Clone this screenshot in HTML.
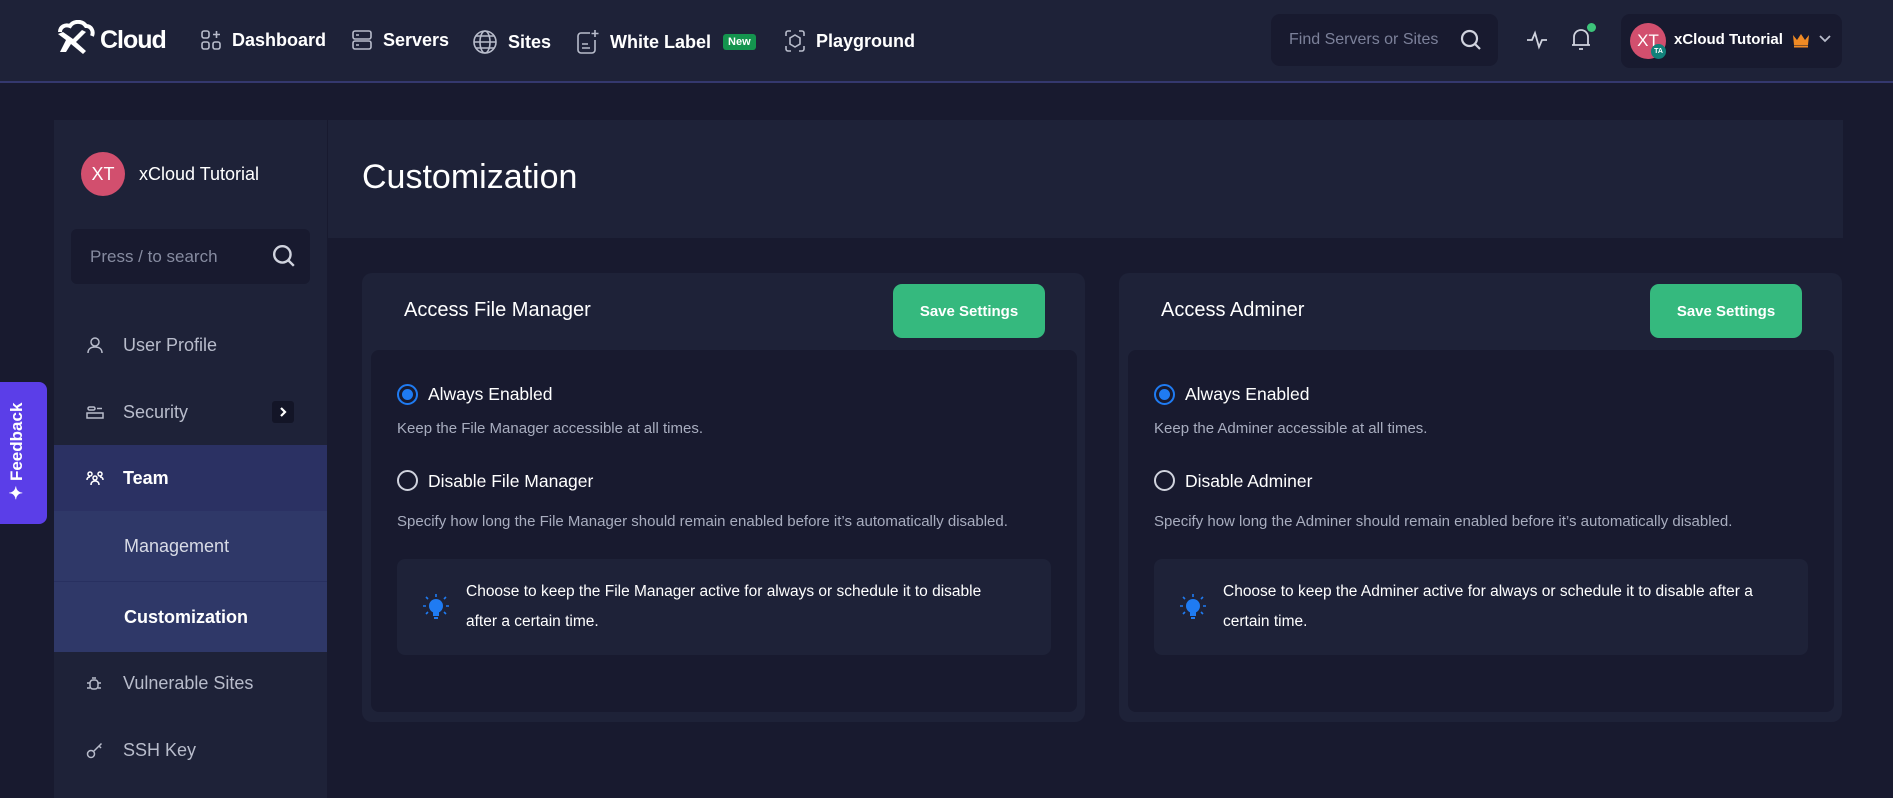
<!DOCTYPE html>
<html><head><meta charset="utf-8">
<style>
*{box-sizing:border-box;margin:0;padding:0}
body{width:1893px;height:798px;overflow:hidden;background:#181a2f;font-family:"Liberation Sans",sans-serif;color:#fff;position:relative}
.abs{position:absolute}
.hdr{left:0;top:0;width:1893px;height:83px;background:#1e2238;border-bottom:2px solid #34386e}
.nav{top:29px;font-size:18px;font-weight:bold;color:#fff;display:flex;align-items:center}
.nav svg{margin-right:10px}
.side{left:54px;top:120px;width:273px;height:678px;background:#1e2238}
.item{position:absolute;left:0;width:273px;display:flex;align-items:center;font-size:18px;color:#b8bccb}
.item > svg{position:absolute;left:32px}
.item span{position:absolute;left:69px}
.card{background:#1e2238;border-radius:10px}
.inner{background:#181a2f;border-radius:8px}
.btn{background:#35b97e;border-radius:9px;font-size:15px;font-weight:bold;display:flex;align-items:center;justify-content:center}
.radio{width:21px;height:21px;border-radius:50%;border:2px solid #d0d3de}
.radio.on{border-color:#1f7bf2}
.radio.on::after{content:"";position:absolute;left:3px;top:3px;width:11px;height:11px;border-radius:50%;background:#1f7bf2}
.lbl{font-size:17.5px;color:#fff}
.desc{font-size:15px;color:#a8adbf}
.info{background:#1e2238;border-radius:8px}
.infot{font-size:15.5px;line-height:30px;color:#fff}
.ct{font-size:20px;color:#fff}
</style></head><body>
<div class="abs hdr"></div>
<svg class="abs" style="left:54px;top:20px" width="44" height="36" viewBox="0 0 44 36"><path d="M6 12c0-5 5-8 10-6 3-5 12-6 16 0 5 0 8 5 6 10" fill="none" stroke="#fff" stroke-width="4"/><path d="M4 14l8 6-6 12h6l5-8 12 10 3-3-10-9 10-10-4-2-9 9-10-7z" fill="#fff"/></svg>
<div class="abs" style="left:100px;top:26px;font-size:25px;font-weight:bold;letter-spacing:-1px">Cloud</div>
<div class="abs nav" style="left:200px"><svg width="22" height="22" viewBox="0 0 22 22" fill="none" stroke="#b8bccb" stroke-width="1.6"><rect x="2" y="2" width="7" height="7" rx="2"/><rect x="2" y="13" width="7" height="7" rx="2"/><rect x="13" y="13" width="7" height="7" rx="2"/><path d="M16.5 2v7M13 5.5h7"/></svg>Dashboard</div>
<div class="abs nav" style="left:351px"><svg width="22" height="22" viewBox="0 0 22 22" fill="none" stroke="#b8bccb" stroke-width="1.6"><rect x="2" y="2" width="18" height="8" rx="2"/><rect x="2" y="12" width="18" height="8" rx="2"/><path d="M5 6h3M5 16h3"/></svg>Servers</div>
<div class="abs nav" style="left:472px"><svg width="26" height="26" viewBox="0 0 26 26" fill="none" stroke="#b8bccb" stroke-width="1.6"><circle cx="13" cy="13" r="11"/><ellipse cx="13" cy="13" rx="5" ry="11"/><path d="M2 13h22M4 7h18M4 19h18"/></svg>Sites</div>
<div class="abs nav" style="left:576px"><svg width="24" height="26" viewBox="0 0 24 26" fill="none" stroke="#b8bccb" stroke-width="1.6"><path d="M14 4H5a3 3 0 0 0-3 3v14a3 3 0 0 0 3 3h11a3 3 0 0 0 3-3V11"/><path d="M19 1v7M15.5 4.5h7M6 15h6M6 19h8"/></svg>White Label<span style="margin-left:12px;background:#14944e;font-size:11px;padding:2px 5px;border-radius:3px">New</span></div>
<div class="abs nav" style="left:784px"><svg width="22" height="24" viewBox="0 0 22 24" fill="none" stroke="#b8bccb" stroke-width="1.6"><path d="M2 7V4a2 2 0 0 1 2-2h3M15 2h3a2 2 0 0 1 2 2v3M20 17v3a2 2 0 0 1-2 2h-3M7 22H4a2 2 0 0 1-2-2v-3"/><path d="M11 6l5 3v6l-5 3-5-3V9z"/></svg>Playground</div>
<div class="abs" style="left:1271px;top:14px;width:227px;height:52px;background:#181a2f;border-radius:9px"></div>
<div class="abs" style="left:1289px;top:31px;font-size:16px;color:#7c819a">Find Servers or Sites</div>
<svg class="abs" style="left:1460px;top:29px" width="22" height="22" viewBox="0 0 22 22" fill="none" stroke="#d0d3de" stroke-width="2.2"><circle cx="9.5" cy="9.5" r="7.5"/><path d="M15 15l5 5"/></svg>
<svg class="abs" style="left:1525px;top:28px" width="24" height="24" viewBox="0 0 24 24" fill="none" stroke="#d0d3de" stroke-width="1.8"><path d="M2 12h5l3-7 4 14 3-7h5"/></svg>
<svg class="abs" style="left:1569px;top:26px" width="24" height="26" viewBox="0 0 24 26" fill="none" stroke="#d0d3de" stroke-width="1.8"><path d="M5 19V11a7 7 0 0 1 14 0v8H5zM3 19h18M10 23h4"/></svg>
<div class="abs" style="left:1587px;top:23px;width:9px;height:9px;border-radius:50%;background:#3dc47a"></div>
<div class="abs" style="left:1621px;top:14px;width:221px;height:54px;background:#181a2f;border-radius:9px"></div>
<div class="abs" style="left:1630px;top:23px;width:36px;height:36px;border-radius:50%;background:#d24f6e;font-size:17px;display:flex;align-items:center;justify-content:center">XT</div>
<div class="abs" style="left:1651px;top:44px;width:15px;height:15px;border-radius:50%;background:#11817a;font-size:7px;font-weight:bold;display:flex;align-items:center;justify-content:center">TA</div>
<div class="abs" style="left:1674px;top:31px;font-size:15px;font-weight:bold">xCloud Tutorial</div>
<svg class="abs" style="left:1792px;top:32px" width="18" height="16" viewBox="0 0 18 16"><path d="M1 3l4 5 4-6 4 6 4-5-1 10H2z" fill="#f08a24"/><rect x="2" y="13.5" width="14" height="2" fill="#f08a24"/></svg>
<svg class="abs" style="left:1818px;top:34px" width="14" height="10" viewBox="0 0 14 10" fill="none" stroke="#b8bccb" stroke-width="1.8"><path d="M2 2l5 5 5-5"/></svg>

<div class="abs side">
  <div class="abs" style="left:27px;top:32px;width:44px;height:44px;border-radius:50%;background:#d24f6e;font-size:18px;display:flex;align-items:center;justify-content:center">XT</div>
  <div class="abs" style="left:85px;top:44px;font-size:18px;color:#fff">xCloud Tutorial</div>
  <div class="abs" style="left:17px;top:109px;width:239px;height:55px;background:#181a2f;border-radius:6px"></div>
  <div class="abs" style="left:36px;top:127px;font-size:17px;color:#868ba0">Press / to search</div>
  <svg class="abs" style="left:218px;top:124px" width="24" height="24" viewBox="0 0 22 22" fill="none" stroke="#d0d3de" stroke-width="2.2"><circle cx="9.5" cy="9.5" r="7.5"/><path d="M15 15l5 5"/></svg>
  <div class="item" style="top:200px;height:50px"><svg width="18" height="18" viewBox="0 0 18 18" fill="none" stroke="#b8bccb" stroke-width="1.5"><circle cx="9" cy="6" r="4"/><path d="M2 17c0-4 3-6 7-6s7 2 7 6"/></svg><span>User Profile</span></div>
  <div class="item" style="top:267px;height:50px"><svg width="18" height="16" viewBox="0 0 18 16" fill="none" stroke="#b8bccb" stroke-width="1.5"><rect x="1" y="9" width="16" height="5"/><rect x="2" y="3" width="7" height="3" rx="1.5"/><path d="M11 4.5h5"/></svg><span>Security</span>
    <div class="abs" style="left:218px;top:14px;width:22px;height:22px;background:#131527;border-radius:3px;display:flex;align-items:center;justify-content:center"><svg width="10" height="12" viewBox="0 0 10 12" fill="none" stroke="#fff" stroke-width="2.2"><path d="M3 2l4 4-4 4"/></svg></div></div>
  <div class="item" style="top:325px;height:66px;background:#2b3163;color:#fff;font-weight:bold"><svg width="18" height="16" viewBox="0 0 18 16" fill="none" stroke="#fff" stroke-width="1.5"><circle cx="4" cy="4" r="2"/><circle cx="14" cy="4" r="2"/><circle cx="9" cy="8" r="2"/><path d="M1 10c0-2 1-3 3-3M17 10c0-2-1-3-3-3M5 15c0-3 2-4 4-4s4 1 4 4"/></svg><span>Team</span></div>
  <div class="item" style="top:391px;height:71px;background:#2f3868;color:#d8dbe6;border-bottom:1px solid #283060"><span style="left:70px">Management</span></div>
  <div class="item" style="top:462px;height:70px;background:#2f3868;color:#fff;font-weight:bold"><span style="left:70px">Customization</span></div>
  <div class="item" style="top:538px;height:50px"><svg width="16" height="16" viewBox="0 0 16 16" fill="none" stroke="#b8bccb" stroke-width="1.5"><rect x="4" y="5" width="8" height="9" rx="3"/><path d="M6 3h4M1 8h3M12 8h3M1 13h3M12 13h3"/></svg><span>Vulnerable Sites</span></div>
  <div class="item" style="top:605px;height:50px"><svg width="18" height="18" viewBox="0 0 18 18" fill="none" stroke="#b8bccb" stroke-width="1.5"><circle cx="5" cy="13" r="3.5"/><path d="M7.5 10.5l8-8M13 5l2 2"/></svg><span>SSH Key</span></div>
</div>
<div class="abs" style="left:0;top:382px;width:47px;height:142px;background:#5b3ee8;border-radius:0 8px 8px 0"></div>
<div class="abs" style="left:7px;top:500px;transform:rotate(-90deg);transform-origin:0 0;font-size:17px;font-weight:bold;white-space:nowrap">✦ Feedback</div>

<div class="abs" style="left:328px;top:120px;width:1515px;height:118px;background:#1e2238"></div>
<div class="abs" style="left:362px;top:158px;font-size:34px;color:#fff">Customization</div>

<div class="abs card" style="left:362px;top:273px;width:723px;height:449px"></div>
<div class="abs ct" style="left:404px;top:299px">Access File Manager</div>
<div class="abs btn" style="left:893px;top:284px;width:152px;height:54px">Save Settings</div>
<div class="abs inner" style="left:371px;top:350px;width:706px;height:362px"></div>
<div class="abs radio on" style="left:397px;top:384px"></div>
<div class="abs lbl" style="left:428px;top:384px">Always Enabled</div>
<div class="abs desc" style="left:397px;top:420px">Keep the File Manager accessible at all times.</div>
<div class="abs radio" style="left:397px;top:470px"></div>
<div class="abs lbl" style="left:428px;top:471px">Disable File Manager</div>
<div class="abs desc" style="left:397px;top:513px">Specify how long the File Manager should remain enabled before it’s automatically disabled.</div>
<div class="abs info" style="left:397px;top:559px;width:654px;height:96px"></div>
<svg class="abs" style="left:423px;top:593px" width="26" height="28" viewBox="0 0 26 28" fill="#1f7bf2"><circle cx="13" cy="13" r="7"/><rect x="10" y="18" width="6" height="5"/><rect x="11" y="24" width="4" height="2"/><path d="M13 1v3M3 4l2 2M23 4l-2 2M0 13h3M23 13h3M3 21l2-2M23 21l-2-2" stroke="#1f7bf2" stroke-width="1.6"/></svg>
<div class="abs infot" style="left:466px;top:577px;width:525px">Choose to keep the File Manager active for always or schedule it to disable after a certain time.</div>

<div class="abs card" style="left:1119px;top:273px;width:723px;height:449px"></div>
<div class="abs ct" style="left:1161px;top:299px">Access Adminer</div>
<div class="abs btn" style="left:1650px;top:284px;width:152px;height:54px">Save Settings</div>
<div class="abs inner" style="left:1128px;top:350px;width:706px;height:362px"></div>
<div class="abs radio on" style="left:1154px;top:384px"></div>
<div class="abs lbl" style="left:1185px;top:384px">Always Enabled</div>
<div class="abs desc" style="left:1154px;top:420px">Keep the Adminer accessible at all times.</div>
<div class="abs radio" style="left:1154px;top:470px"></div>
<div class="abs lbl" style="left:1185px;top:471px">Disable Adminer</div>
<div class="abs desc" style="left:1154px;top:513px">Specify how long the Adminer should remain enabled before it’s automatically disabled.</div>
<div class="abs info" style="left:1154px;top:559px;width:654px;height:96px"></div>
<svg class="abs" style="left:1180px;top:593px" width="26" height="28" viewBox="0 0 26 28" fill="#1f7bf2"><circle cx="13" cy="13" r="7"/><rect x="10" y="18" width="6" height="5"/><rect x="11" y="24" width="4" height="2"/><path d="M13 1v3M3 4l2 2M23 4l-2 2M0 13h3M23 13h3M3 21l2-2M23 21l-2-2" stroke="#1f7bf2" stroke-width="1.6"/></svg>
<div class="abs infot" style="left:1223px;top:577px;width:545px">Choose to keep the Adminer active for always or schedule it to disable after a certain time.</div>
</body></html>
